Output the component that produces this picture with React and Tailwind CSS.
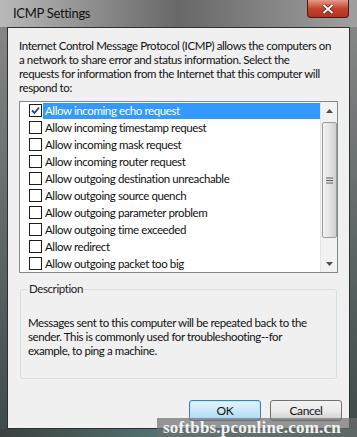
import React from "react";

const rules = [
  "Allow incoming echo request",
  "Allow incoming timestamp request",
  "Allow incoming mask request",
  "Allow incoming router request",
  "Allow outgoing destination unreachable",
  "Allow outgoing source quench",
  "Allow outgoing parameter problem",
  "Allow outgoing time exceeded",
  "Allow redirect",
  "Allow outgoing packet too big",
];

function Checkbox({ checked }) {
  return (
    <div className="w-[13px] h-[13px] border border-[#1e1e1e] bg-white flex items-center justify-center shrink-0">
      {checked && (
        <svg width="11" height="11" viewBox="0 0 11 11">
          <path d="M2 5.5 L4.5 8 L9 2.5" fill="none" stroke="#1c3f86" strokeWidth="1.8" />
        </svg>
      )}
    </div>
  );
}

function Scrollbar() {
  return (
    <div className="w-[17px] h-full bg-[#f2f2f2] flex flex-col items-center border-l border-[#e4e4e4]">
      <div className="h-[17px] w-full flex items-center justify-center">
        <svg width="7" height="4" viewBox="0 0 7 4">
          <path d="M0 4 L3.5 0 L7 4 Z" fill="#4d4d4d" />
        </svg>
      </div>
      <div className="mt-[3px] h-[116px] w-[15px] rounded-[2px] border border-[#9c9c9c] bg-gradient-to-r from-[#f3f3f3] via-[#e4e4e4] to-[#d0d0d0] flex items-center justify-center">
        <svg width="7" height="7" viewBox="0 0 7 7">
          <path d="M0 1 H7 M0 3.5 H7 M0 6 H7" stroke="#5c5c5c" strokeWidth="1" />
        </svg>
      </div>
      <div className="flex-1" />
      <div className="h-[17px] w-full flex items-center justify-center">
        <svg width="7" height="4" viewBox="0 0 7 4">
          <path d="M0 0 L3.5 4 L7 0 Z" fill="#4d4d4d" />
        </svg>
      </div>
    </div>
  );
}

export default function App() {
  return (
    <div
      className="relative w-[357px] h-[437px] overflow-hidden flex flex-col bg-gradient-to-b from-[#8a8a8a] to-[#3e4a4a]"
      style={{ fontFamily: 'Lato, "Noto Sans", "Liberation Sans", sans-serif' }}
    >
      {/* Title bar */}
      <div className="h-[27px] shrink-0 relative flex items-center pl-[13px] bg-gradient-to-r from-[#b9b9b9] via-[#686868] to-[#a0a0a0]">
        <span className="text-[13px] tracking-[-0.3px] text-[#111]">ICMP Settings</span>
        <div className="absolute right-[8px] top-0 w-[42px] h-[18px] rounded-b-[4px] border border-t-0 border-[#4a1a14] bg-gradient-to-b from-[#e49a88] via-[#c2452f] to-[#b5301c] flex items-center justify-center">
          <svg width="12" height="10" viewBox="0 0 12 10">
            <path d="M1.5 1 L10.5 9 M10.5 1 L1.5 9" stroke="#5a1c12" strokeWidth="3.4" />
            <path d="M1.5 1 L10.5 9 M10.5 1 L1.5 9" stroke="#ffffff" strokeWidth="2" />
          </svg>
        </div>
      </div>

      {/* Body */}
      <div className="flex-1 flex px-[7px]">
        <div className="w-[343px] shrink-0 overflow-hidden border border-[#2f2f2f] bg-[#f0f0f0] flex flex-col pl-[11px] pr-[10px] pt-[11px] text-[11.5px] tracking-[-0.4px] text-[#111] leading-[14px]">
          <p className="whitespace-nowrap">
            Internet Control Message Protocol (ICMP) allows the computers on
            <br />
            a network to share error and status information. Select the
            <br />
            requests for information from the Internet that this computer will
            <br />
            respond to:
          </p>

          {/* List */}
          <div className="mt-[6px] w-[319px] h-[172px] border border-[#828790] bg-white flex">
            <div className="flex-1 flex flex-col pl-[9px]">
              {rules.map((r, i) => (
                <div key={r} className="h-[17px] flex items-center">
                  <Checkbox checked={i === 0} />
                  <span
                    className={
                      "ml-[1px] h-[16px] flex items-center pl-[2px] whitespace-nowrap " +
                      (i === 0 ? "flex-1 bg-[#3399ff] text-white" : "")
                    }
                  >
                    {r}
                  </span>
                </div>
              ))}
            </div>
            <Scrollbar />
          </div>

          {/* Description */}
          <fieldset className="mt-[9px] ml-[1px] w-[317px] h-[97px] border border-[#d5dfe5] rounded-[3px] px-[7px]">
            <legend className="px-[1px] text-[#222]">Description</legend>
            <p className="mt-[20px] whitespace-nowrap">
              Messages sent to this computer will be repeated back to the
              <br />
              sender. This is commonly used for troubleshooting--for
              <br />
              example, to ping a machine.
            </p>
          </fieldset>

          {/* Buttons */}
          <div className="mt-[21px] flex justify-end gap-[9px] mr-[-3px]">
            <button className="w-[72px] h-[21px] rounded-[3px] border border-[#3c7fb1] bg-gradient-to-b from-[#e5f4fc] via-[#cbe7f7] to-[#a7d9f5] shadow-[inset_0_0_0_1px_#bfe6f9] text-[12px] text-[#111]">
              OK
            </button>
            <button className="w-[72px] h-[21px] rounded-[3px] border border-[#707070] bg-gradient-to-b from-[#f2f2f2] via-[#ebebeb] to-[#cfcfcf] text-[12px] text-[#111]">
              Cancel
            </button>
          </div>
        </div>
      </div>
      <div className="h-[8px] shrink-0 bg-gradient-to-r from-[#3b4040] via-[#547a78] to-[#3d5a58]" />

      {/* Watermark */}
      <div className="absolute left-[157px] top-[418px] w-[200px] h-[19px] bg-[#6e6e6e]/70 flex items-center pl-[6px]">
        <span
          className="text-[17px] font-bold text-white/90 tracking-[0.2px]"
          style={{ fontFamily: '"Liberation Serif", "DejaVu Serif", serif' }}
        >
          softbbs.pconline.com.cn
        </span>
      </div>
    </div>
  );
}
